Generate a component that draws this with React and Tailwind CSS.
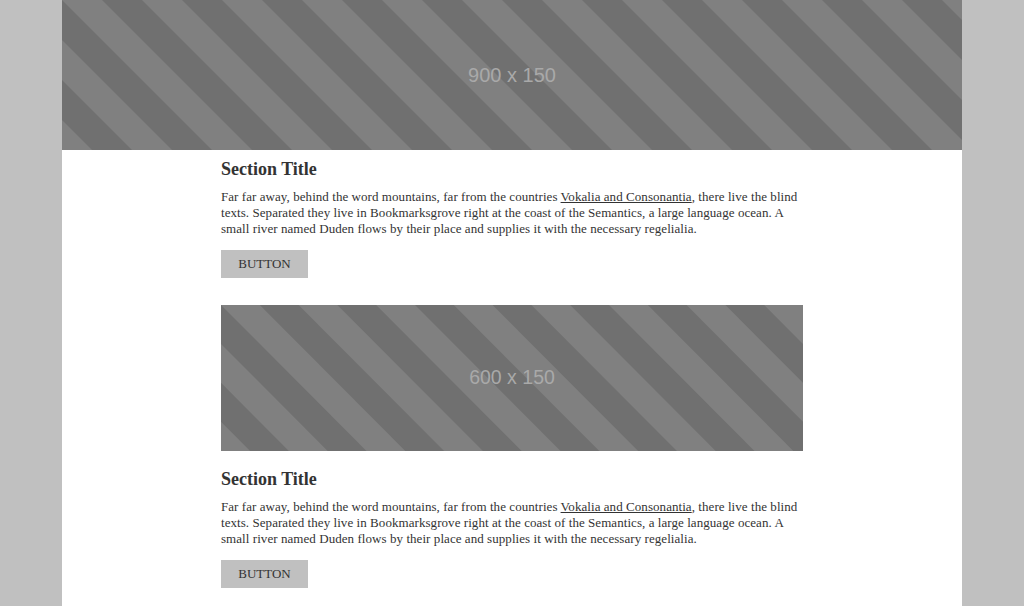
import React from "react";

function Stripes({ w, h }) {
  const bands = [];
  const start = -Math.ceil((h + 80) / 80) * 80;
  for (let c = start; c < w + 80; c += 80) {
    bands.push(
      <polygon
        key={c}
        points={`${c},0 ${c + 40},0 ${c + 40 + h},${h} ${c + h},${h}`}
        fill="#808080"
      />
    );
  }
  return (
    <svg
      viewBox={`0 0 ${w} ${h}`}
      preserveAspectRatio="none"
      className="absolute inset-0 h-full w-full"
    >
      <rect x="0" y="0" width={w} height={h} fill="#707070" />
      {bands}
    </svg>
  );
}

function Placeholder({ w, h, className, textClass }) {
  return (
    <div className={`relative overflow-hidden ${className}`}>
      <Stripes w={w} h={h} />
      <div
        className={`absolute inset-0 flex items-center justify-center text-[#a9a9a9] ${textClass}`}
        style={{ fontFamily: '"Liberation Sans", Arial, sans-serif' }}
      >
        {w} x {h}
      </div>
    </div>
  );
}

function Section({ first }) {
  return (
    <div className={first ? "pt-[8px]" : "pt-[17px]"}>
      <h2 className="text-[18px] font-bold leading-[22px] text-[#333333]">
        Section Title
      </h2>
      <p className="mt-[9px] text-[13px] leading-[16px] tracking-[0.06px] text-[#333333]">
        Far far away, behind the word mountains, far from the countries{" "}
        <a href="#" className="underline text-[#333333]">
          Vokalia and Consonantia
        </a>
        , there live the blind texts. Separated they live in Bookmarksgrove
        right at the coast of the Semantics, a large language ocean. A small
        river named Duden flows by their place and supplies it with the
        necessary regelialia.
      </p>
      <div className="mt-[13px]">
        <a
          href="#"
          className="inline-flex h-[28px] w-[87px] items-center justify-center bg-[#c0c0c0] text-[13px] text-[#333333]"
        >
          BUTTON
        </a>
      </div>
    </div>
  );
}

export default function App() {
  return (
    <div
      className="min-h-screen w-full bg-[#c0c0c0]"
      style={{ fontFamily: '"Liberation Serif", "Times New Roman", serif' }}
    >
      <div className="mx-auto w-[900px] bg-white pb-[40px]">
        <Placeholder w={900} h={150} className="h-[150px] w-[900px]" textClass="text-[20px]" />
        <div className="mx-auto w-[582px]">
          <Section first />
          <Placeholder
            w={600}
            h={150}
            className="mt-[27px] h-[146px] w-[582px]"
            textClass="text-[19.5px]"
          />
          <Section />
        </div>
      </div>
    </div>
  );
}
